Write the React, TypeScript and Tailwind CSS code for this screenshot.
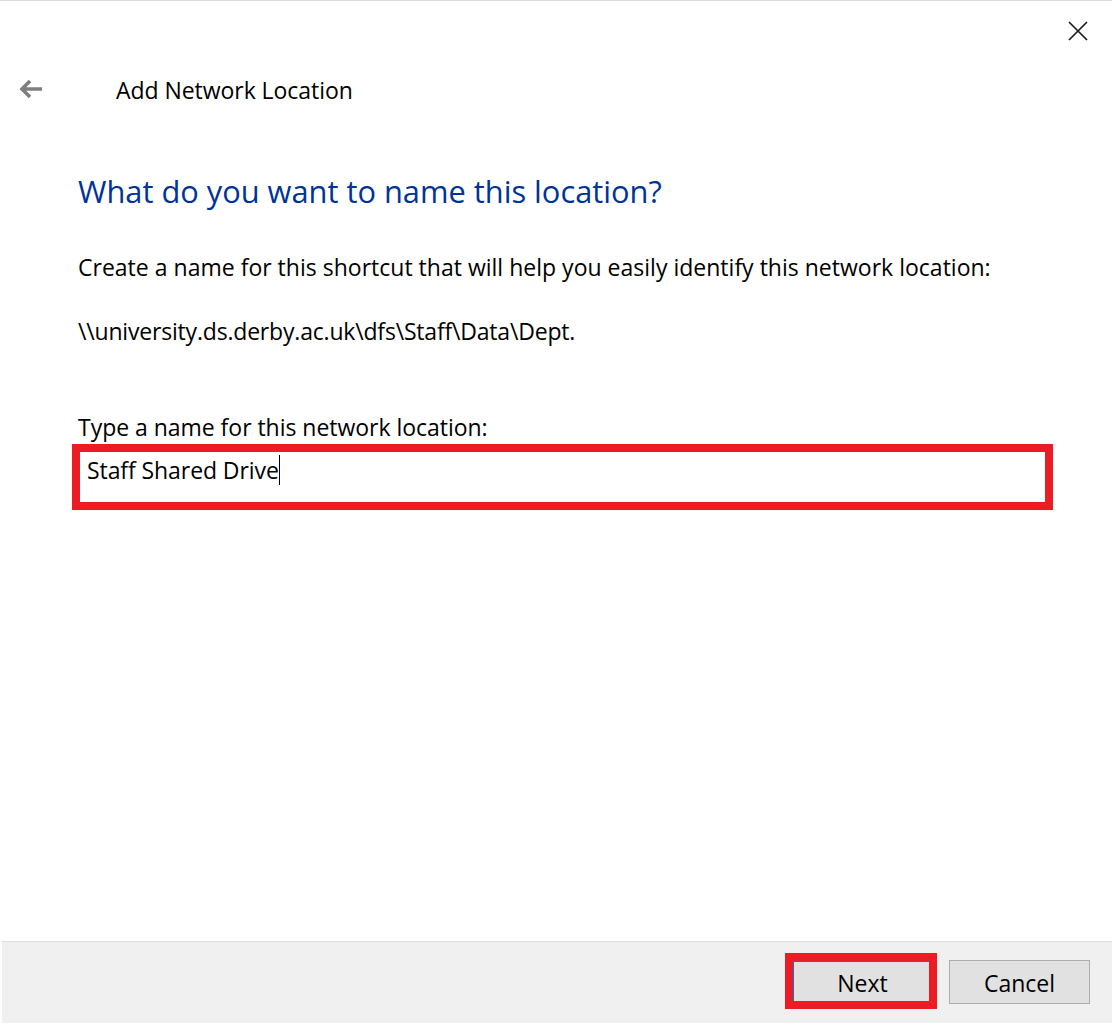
export default function App() {
  return (
    <div className="w-[1112px] h-[1024px] bg-white flex flex-col border-t border-[#dcdcdc] text-black font-['Open_Sans','Noto_Sans',sans-serif]">
      <div className="h-[940px] flex flex-col">
        <div className="flex justify-end h-[30px] pt-[20px] pr-[24px]">
          <svg width="20" height="20" viewBox="0 0 20 20" fill="none" stroke="#1a1a1a" strokeWidth="1.7">
            <path d="M1 1 L19 19 M19 1 L1 19" />
          </svg>
        </div>
        <div className="flex items-center h-[60px] pl-[19px] mt-[29px]">
          <svg className="-mt-[3px]" width="24" height="20" viewBox="0 0 24 20" fill="none" stroke="#7f7f7f" strokeWidth="3.6">
            <path d="M23 10 H3 M11 2 L3 10 L11 18" />
          </svg>
          <span className="ml-[73px] text-[23px] leading-[30px] tracking-[-0.05px]">Add Network Location</span>
        </div>
        <div className="pl-[78px] flex flex-col">
          <h1 className="text-[30.8px] leading-[40px] text-[#003399] mt-[51px] font-normal">What do you want to name this location?</h1>
          <p className="text-[23px] leading-[30px] mt-[41px] tracking-[0.01px]">Create a name for this shortcut that will help you easily identify this network location:</p>
          <p className="text-[23px] leading-[30px] mt-[34px] tracking-[-0.19px]">\\university.ds.derby.ac.uk\dfs\Staff\Data\Dept.</p>
          <p className="text-[23px] leading-[30px] mt-[66px] tracking-[-0.03px]">Type a name for this network location:</p>
          <div className="w-[981px] h-[66px] -ml-[6px] mt-[2px] border-[8px] border-[#ed1c24] pl-[7px] flex items-start">
            <span className="text-[23px] leading-[30px] mt-[3px] border-r border-black tracking-[-0.08px]">Staff Shared Drive</span>
          </div>
        </div>
      </div>
      <div className="ml-[2px] h-[82px] bg-[#f0f0f0] border-t border-[#dfdfdf] flex items-start justify-end pt-[11px] pr-[22px] gap-[12px]">
        <div className="w-[152px] h-[56px] border-[8px] border-[#ed1c24] flex">
          <button className="flex-1 bg-[#e1e1e1] border-t border-l border-[#0078d7] text-[23px] leading-none pl-[2px] pt-[4px]">Next</button>
        </div>
        <button className="mt-[7px] w-[141px] h-[44px] bg-[#e1e1e1] border border-[#adadad] text-[23px] leading-none pt-[3px]">Cancel</button>
      </div>
    </div>
  );
}
